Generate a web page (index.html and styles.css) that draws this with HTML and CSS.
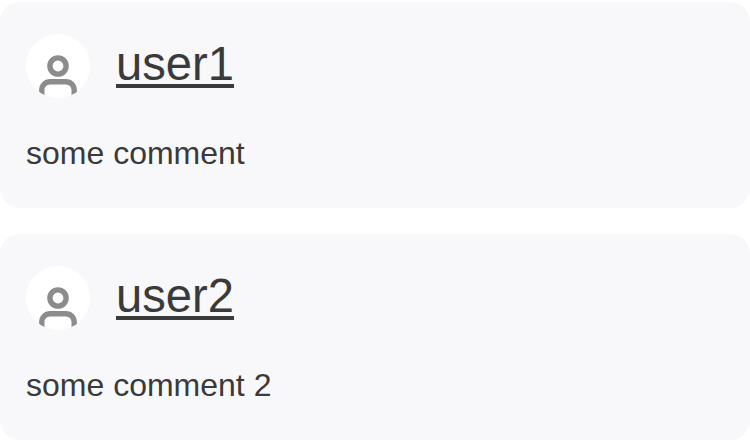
FILE: index.html
```html
<!DOCTYPE html>
<html lang="en">
<head>
<meta charset="utf-8">
<title>Comments</title>
<link rel="stylesheet" href="styles.css">
</head>
<body>
<main class="comments">
  <article class="comment">
    <header class="author">
      <span class="avatar"><svg viewBox="0 0 64 64"><circle cx="32" cy="32" r="8.1"/><path d="M15.8 64V56a8.3 8.3 0 0 1 8.3-8.3H39.9a8.3 8.3 0 0 1 8.3 8.3V64"/></svg></span>
      <a class="name">user1</a>
    </header>
    <p class="text">some comment</p>
  </article>
  <article class="comment">
    <header class="author">
      <span class="avatar"><svg viewBox="0 0 64 64"><circle cx="32" cy="32" r="8.1"/><path d="M15.8 64V56a8.3 8.3 0 0 1 8.3-8.3H39.9a8.3 8.3 0 0 1 8.3 8.3V64"/></svg></span>
      <a class="name">user2</a>
    </header>
    <p class="text">some comment 2</p>
  </article>
</main>
</body>
</html>
```
FILE: styles.css
```css
body {
  margin: 0;
  background: #fff;
  color: #3a3a3a;
  font-family: "Liberation Sans", Arial, sans-serif;
}
.comments {
  display: flex;
  flex-direction: column;
  gap: 26px;
  padding-top: 2px;
}
.comment {
  box-sizing: border-box;
  height: 206px;
  padding: 32px 26px;
  border-radius: 20px;
  background: #f8f8fa;
}
.author {
  display: flex;
  align-items: center;
  gap: 26px;
  height: 64px;
}
.avatar {
  width: 64px;
  height: 64px;
  border-radius: 50%;
  overflow: hidden;
  background: #fff;
}
.avatar svg {
  display: block;
  fill: none;
  stroke: #8c8c8c;
  stroke-width: 5.4;
}
.name {
  padding-bottom: 4px;
  font-size: 47.2px;
  line-height: 60px;
  text-decoration: underline;
  text-decoration-thickness: 4px;
  text-underline-offset: 4px;
}
.text {
  margin: 37px 0 0;
  font-size: 32px;
  line-height: 37px;
}
```
